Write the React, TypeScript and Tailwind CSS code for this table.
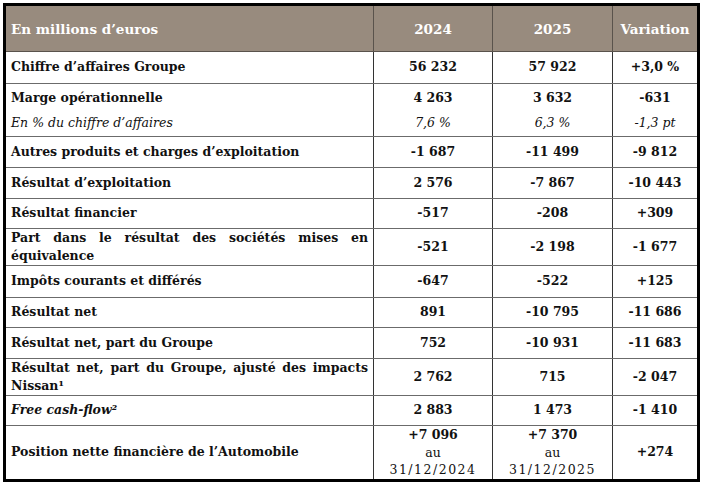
import React from 'react';

type Row = {
  label: React.ReactNode;
  a: React.ReactNode;
  b: React.ReactNode;
  c: React.ReactNode;
  h: number;
};

const twoLine = (first: string, second: string) => (
  <div className="leading-[18px]">
    <div className="[text-align-last:justify]">{first}</div>
    <div>{second}</div>
  </div>
);

const stacked = (top: string, bottom: string) => (
  <div>
    <div className="leading-[25px]">{top}</div>
    <div className="leading-[25px] font-normal italic">{bottom}</div>
  </div>
);

const dated = (value: string, date: string) => (
  <div className="leading-[17.5px]">
    <div>{value}</div>
    <div className="font-normal">au</div>
    <div className="font-normal tracking-[1.5px]">{date}</div>
  </div>
);

const rows: Row[] = [
  { label: 'Chiffre d’affaires Groupe', a: '56 232', b: '57 922', c: '+3,0 %', h: 32 },
  {
    label: stacked('Marge opérationnelle', 'En % du chiffre d’affaires'),
    a: stacked('4 263', '7,6 %'),
    b: stacked('3 632', '6,3 %'),
    c: stacked('-631', '-1,3 pt'),
    h: 53,
  },
  { label: 'Autres produits et charges d’exploitation', a: '-1 687', b: '-11 499', c: '-9 812', h: 31 },
  { label: 'Résultat d’exploitation', a: '2 576', b: '-7 867', c: '-10 443', h: 31 },
  { label: 'Résultat financier', a: '-517', b: '-208', c: '+309', h: 30 },
  {
    label: twoLine('Part dans le résultat des sociétés mises en', 'équivalence'),
    a: '-521',
    b: '-2 198',
    c: '-1 677',
    h: 36,
  },
  { label: 'Impôts courants et différés', a: '-647', b: '-522', c: '+125', h: 32 },
  { label: 'Résultat net', a: '891', b: '-10 795', c: '-11 686', h: 30 },
  { label: 'Résultat net, part du Groupe', a: '752', b: '-10 931', c: '-11 683', h: 31 },
  {
    label: twoLine('Résultat net, part du Groupe, ajusté des impacts', 'Nissan¹'),
    a: '2 762',
    b: '715',
    c: '-2 047',
    h: 37,
  },
  { label: <span className="italic">Free cash-flow²</span>, a: '2 883', b: '1 473', c: '-1 410', h: 30 },
  {
    label: 'Position nette financière de l’Automobile',
    a: dated('+7 096', '31/12/2024'),
    b: dated('+7 370', '31/12/2025'),
    c: '+274',
    h: 55,
  },
];

export default function App() {
  return (
    <div className="w-[705px] h-[484px] bg-white p-[3px] [font-family:'DejaVu_Serif',serif] text-[12.5px] font-bold text-[#111]">
      <table className="w-[697px] table-fixed border-collapse border-[3px] border-black">
        <colgroup>
          <col className="w-[369px]" />
          <col className="w-[119px]" />
          <col className="w-[120px]" />
          <col className="w-[86px]" />
        </colgroup>
        <thead>
          <tr className="bg-[#988b7e] text-[13.5px] text-white">
            <th className="h-[47px] border-b border-[#5a534c] px-[5px] pt-[2px] text-left align-middle">
              En millions d’euros
            </th>
            <th className="border-b border-l border-[#5a534c] pt-[2px] text-center">2024</th>
            <th className="border-b border-l border-[#5a534c] pt-[2px] text-center">2025</th>
            <th className="border-b border-l border-[#5a534c] pt-[2px] text-center">Variation</th>
          </tr>
        </thead>
        <tbody>
          {rows.map((r, i) => (
            <tr key={i}>
              <td
                className="border-b border-[#6b6b6b] px-[5px] text-left align-middle"
                style={{ height: r.h }}
              >
                {r.label}
              </td>
              <td className="border-b border-l border-[#6b6b6b] border-l-[#333] text-center align-middle">{r.a}</td>
              <td className="border-b border-l border-[#6b6b6b] border-l-[#333] text-center align-middle">{r.b}</td>
              <td className="border-b border-l border-[#6b6b6b] border-l-[#333] text-center align-middle">{r.c}</td>
            </tr>
          ))}
        </tbody>
      </table>
    </div>
  );
}
